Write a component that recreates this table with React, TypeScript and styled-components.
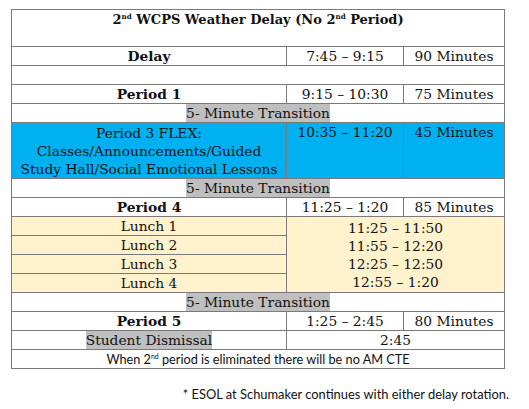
import React from "react";
import styled, { createGlobalStyle } from "styled-components";

const Global = createGlobalStyle`
  html, body { margin: 0; padding: 0; background: #ffffff; }
  body { width: 529px; height: 409px; overflow: hidden; }
`;

const Page = styled.div`
  padding: 9px 0 0 11px;
  font-family: "DejaVu Serif", "Liberation Serif", serif;
  color: #111;
`;

const Table = styled.table`
  border-collapse: collapse;
  table-layout: fixed;
  width: 493px;
  font-size: 13.8px;
  line-height: 18px;
  border: 1px solid #6e6e6e;
`;

const Cell = styled.td<{ $bold?: boolean; $bg?: string; $top?: boolean; $sans?: boolean }>`
  border: 1px solid #7a7a7a;
  padding: 0 5px;
  text-align: center;
  vertical-align: ${(p) => (p.$top ? "top" : "middle")};
  font-weight: ${(p) => (p.$bold ? 700 : 400)};
  background: ${(p) => p.$bg ?? "transparent"};
  height: 18px;
  white-space: nowrap;
  ${(p) =>
    p.$sans &&
    `font-family: "Lato", "Open Sans", sans-serif; font-size: 12.7px;`}
`;

const TitleCell = styled(Cell)`
  font-size: 13px;
  height: 35px;
  padding-top: 1px;
`;

const Highlight = styled.span`
  display: inline-block;
  background: #bfbfbf;
  line-height: 18px;
`;

const Sup = styled.sup`
  font-size: 0.55em;
  vertical-align: 0.7em;
  line-height: 0;
`;

const Lines = styled.div`
  white-space: normal;
`;

const Footnote = styled.div`
  font-family: "Lato", "Open Sans", sans-serif;
  font-size: 12.9px;
  color: #111;
  text-align: right;
  width: 498px;
  margin-top: 17px;
`;

const BLUE = "#00b0f0";
const CREAM = "#fff2cc";

const Transition = () => (
  <tr>
    <Cell colSpan={3}>
      <Highlight>5- Minute Transition</Highlight>
    </Cell>
  </tr>
);

const lunches = ["Lunch 1", "Lunch 2", "Lunch 3", "Lunch 4"];
const lunchTimes = ["11:25 – 11:50", "11:55 – 12:20", "12:25 – 12:50", "12:55 – 1:20"];

export default function App() {
  return (
    <Page>
      <Global />
      <Table>
        <colgroup>
          <col style={{ width: 275 }} />
          <col style={{ width: 117 }} />
          <col style={{ width: 101 }} />
        </colgroup>
        <tbody>
          <tr>
            <TitleCell colSpan={3} $bold $top>
              2<Sup>nd</Sup> WCPS Weather Delay (No 2<Sup>nd</Sup> Period)
            </TitleCell>
          </tr>
          <tr>
            <Cell $bold>Delay</Cell>
            <Cell>7:45 – 9:15</Cell>
            <Cell>90 Minutes</Cell>
          </tr>
          <tr>
            <Cell colSpan={3}></Cell>
          </tr>
          <tr>
            <Cell $bold>Period 1</Cell>
            <Cell>9:15 – 10:30</Cell>
            <Cell>75 Minutes</Cell>
          </tr>
          <Transition />
          <tr>
            <Cell $bg={BLUE} style={{ height: 55 }}>
              <Lines>
                Period 3 FLEX:
                <br />
                Classes/Announcements/Guided
                <br />
                Study Hall/Social Emotional Lessons
              </Lines>
            </Cell>
            <Cell $bg={BLUE} $top>10:35 – 11:20</Cell>
            <Cell $bg={BLUE} $top>45 Minutes</Cell>
          </tr>
          <Transition />
          <tr>
            <Cell $bold>Period 4</Cell>
            <Cell>11:25 – 1:20</Cell>
            <Cell>85 Minutes</Cell>
          </tr>
          {lunches.map((l, i) => (
            <tr key={l}>
              <Cell $bg={CREAM}>{l}</Cell>
              {i === 0 && (
                <Cell $bg={CREAM} colSpan={2} rowSpan={4}>
                  <Lines>
                    {lunchTimes.map((t) => (
                      <div key={t}>{t}</div>
                    ))}
                  </Lines>
                </Cell>
              )}
            </tr>
          ))}
          <Transition />
          <tr>
            <Cell $bold>Period 5</Cell>
            <Cell>1:25 – 2:45</Cell>
            <Cell>80 Minutes</Cell>
          </tr>
          <tr>
            <Cell>
              <Highlight>Student Dismissal</Highlight>
            </Cell>
            <Cell colSpan={2}>2:45</Cell>
          </tr>
          <tr>
            <Cell colSpan={3} $sans>
              When 2<Sup>nd</Sup> period is eliminated there will be no AM CTE
            </Cell>
          </tr>
        </tbody>
      </Table>
      <Footnote>* ESOL at Schumaker continues with either delay rotation.</Footnote>
    </Page>
  );
}
